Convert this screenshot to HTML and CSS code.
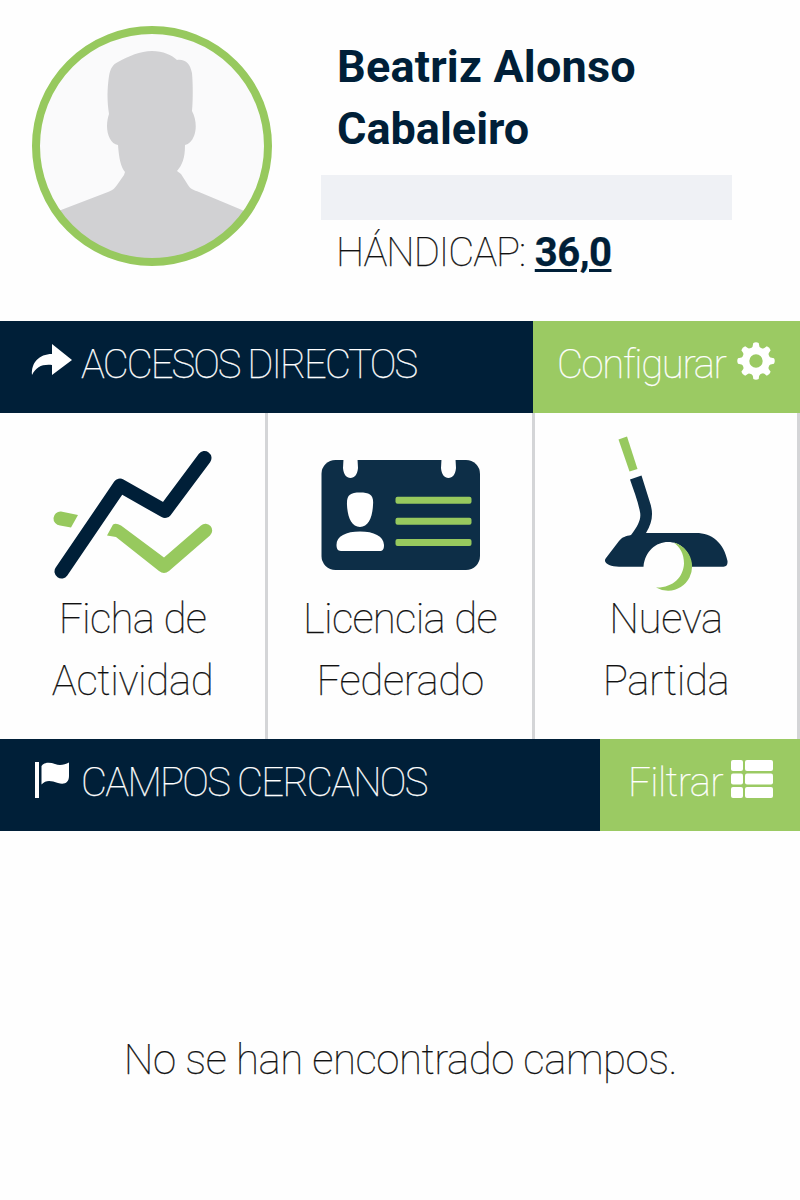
FILE: index.html
```
<!DOCTYPE html>
<html lang="es">
<head>
<meta charset="utf-8">
<title>Inicio</title>
<link rel="stylesheet" href="styles.css">
</head>
<body>
<header class="profile">
  <svg class="avatar" viewBox="0 0 240 240">
    <defs><clipPath id="face"><circle cx="120" cy="120" r="113"/></clipPath></defs>
    <circle cx="120" cy="120" r="116" fill="#fafafb"/>
    <path clip-path="url(#face)" fill="#d1d1d3" d="M0 205C12 197 20 188 29 184L76 166C81 164 83 162 85 159L92 149L93 146C89 141 87 133 86 119C79 118 75 109 75 100C75 95 76 91 77 88C75 75 75 64 77 50C78 43 81 38 86 36C97 30 108 25 120 25C131 25 140 29 145 34C154 33 158 38 160 47C161 59 161 73 160 85C164 92 165 103 162 110C160 115 157 118 153 119C153 133 150 139 145 145L149 148L156 159C158 163 162 164 167 166L210 184L240 200V240H0Z"/>
    <circle cx="120" cy="120" r="116" fill="none" stroke="#97c95e" stroke-width="8"/>
  </svg>
  <div class="info">
    <h1 class="name"><span class="name-a">Beatriz Alonso</span><br><span class="name-b">Cabaleiro</span></h1>
    <div class="redacted"></div>
    <p class="handicap"><span class="hc-label">HÁNDICAP:</span> <a class="hc-value">36,0</a></p>
  </div>
</header>

<section class="bar">
  <h2 class="bar-title">
    <svg class="ico-share" width="42" height="32" viewBox="0 0 42 32"><path fill="#fff" d="M21 0L41 16L21 31V21C11 20 5 23 1 31C0 19 8 10 21 10Z"/></svg>
    <span class="t-accesos">ACCESOS DIRECTOS</span>
  </h2>
  <a class="action action-config"><span class="t-config">Configurar</span>
    <svg class="ico-gear" width="38" height="38" viewBox="-19 -19 38 38"><g fill="#fff"><path fill-rule="evenodd" d="M-14 0A14 14 0 1 0 14 0A14 14 0 1 0-14 0ZM-6.700 0A6.700 6.700 0 1 1 6.700 0A6.700 6.700 0 1 1-6.700 0Z"/><path id="tooth" d="M-5-12Q-3-14-2.700-18Q0-19.500 2.700-18Q3-14 5-12Z"/><use href="#tooth" transform="rotate(45)"/><use href="#tooth" transform="rotate(90)"/><use href="#tooth" transform="rotate(135)"/><use href="#tooth" transform="rotate(180)"/><use href="#tooth" transform="rotate(225)"/><use href="#tooth" transform="rotate(270)"/><use href="#tooth" transform="rotate(315)"/></g></svg>
  </a>
</section>

<nav class="tiles">
  <a class="tile">
    <svg class="art" viewBox="0 0 266 180">
      <path fill="#97c95e" d="M61 98.500L78 102L71 114.500L60 112.500A7 7 0 0 1 61 98.500Z"/>
      <path fill="#97c95e" d="M107 122.500L113 111.500Q116 109.500 121 112.500L164 144.500L201 112.500A6.500 6.500 0 0 1 210 122.500L169 158Q164 162 159 158L116 124Z"/>
      <path fill="none" stroke="#001f38" stroke-width="14" stroke-linecap="round" stroke-linejoin="round" d="M61.500 158.500L120 72.500L165 98L204.500 45"/>
    </svg>
    <span class="label"><span class="t-ficha">Ficha de</span><br><span class="t-act">Actividad</span></span>
  </a>
  <a class="tile">
    <svg class="art" viewBox="0 0 266 180">
      <rect x="53.500" y="47" width="158.500" height="110" rx="14" fill="#0d2e47"/>
      <path fill="#fefefe" d="M75.500 46H89.500L90 55C89.500 61.500 86.500 65 82.500 65S75.500 61.500 75 55ZM173.500 46H187.500L188 55C187.500 61.500 184.500 65 180.500 65S173.500 61.500 173 55Z"/>
      <path fill="#fff" d="M92 79.500C102 79.500 106 82 105 92C104.500 104 100.500 114 92 114S79.500 104 79 92C78.500 82 82 79.500 92 79.500ZM73 138C69.500 138 68.500 135 68.500 132C68.500 123 78 118.500 92 118.500S115.500 123 116 132C116 136 115 138 111.500 138Z"/>
      <g fill="#97c95e"><rect x="127.500" y="83.700" width="76" height="7" rx="2"/><rect x="127.500" y="104.700" width="76" height="7" rx="2"/><rect x="127.500" y="125.900" width="76" height="7" rx="2"/></g>
    </svg>
    <span class="label"><span class="t-lic">Licencia de</span><br><span class="t-fed">Federado</span></span>
  </a>
  <a class="tile">
    <svg class="art" viewBox="0 0 266 180">
      <path fill="#97c95e" d="M83.500 26.500L92 23.500L102.500 56L94.500 58.500Z"/>
      <path fill="#0d2e47" d="M95 66.500L106.500 62.500L114.500 88C118.500 99 118 109 111 120H161C177 120 189 130 192.500 148Q193 153.700 188.500 153.700H157C155 137 145 129 133 129S110 138 108.500 153.700H84C75 153.700 67 150 71 145L84 128C87 124 91 123 96 122C103 113 106.500 106 105 99C103 88 98.500 77 95 66.500Z"/>
      <path fill="#97c95e" d="M138.500 129.500A24.500 24.500 0 0 1 157 152A24 24 0 0 1 121 174.500C138 175 148.500 164 149 150.500C149 141 145 133.500 138.500 129.500Z"/>
    </svg>
    <span class="label"><span class="t-nueva">Nueva</span><br><span class="t-part">Partida</span></span>
  </a>
</nav>

<section class="bar">
  <h2 class="bar-title">
    <svg class="ico-flag" width="36" height="38" viewBox="0 0 36 38"><path fill="#fff" d="M0 1H4V37H0ZM6.500 5C9 1 15 1 20 3C25 5 30 3.500 34 1.500V15C34 22 29 24 23 22C16 19.500 11 18.500 6.500 23.500Z"/></svg>
    <span class="t-campos">CAMPOS CERCANOS</span>
  </h2>
  <a class="action action-filter"><span class="t-filtrar">Filtrar</span>
    <svg class="ico-list" width="42" height="38" viewBox="0 0 42 38"><g fill="#fff"><rect width="12" height="11" rx="2"/><rect x="14" width="28" height="11" rx="2"/><rect y="13.500" width="12" height="11" rx="2"/><rect x="14" y="13.500" width="28" height="11" rx="2"/><rect y="27" width="12" height="11" rx="2"/><rect x="14" y="27" width="28" height="11" rx="2"/></g></svg>
  </a>
</section>

<p class="empty"><span class="t-empty">No se han encontrado campos.</span></p>
</body>
</html>
```
FILE: styles.css
```
* { box-sizing: border-box; }
body { margin: 0; background: #fefefe; color: #111; font-family: Roboto, "Open Sans", sans-serif; font-weight: 100; font-size: 42px; line-height: 62px; }
h1, h2, p { margin: 0; font-weight: inherit; font-size: inherit; }
span { white-space: nowrap; }
svg { display: block; flex: none; }
.profile { display: flex; height: 321px; padding: 26px 0 0 32px; }
.avatar { width: 240px; height: 240px; }
.info { padding: 10px 0 0 49px; }
.name { padding-left: 16px; font-size: 45px; font-weight: 700; color: #001f38; letter-spacing: 0.2px; }
.name-b { letter-spacing: 0; }
.redacted { width: 411px; height: 45px; margin-top: 15px; background: #eff1f5; }
.handicap { padding: 2px 0 0 15px; font-size: 40px; }
.hc-label { letter-spacing: -1px; }
.hc-value { font-weight: 700; color: #001f38; letter-spacing: -0.5px; text-decoration: underline; text-decoration-thickness: 3px; text-underline-offset: 3px; }
.bar { display: flex; height: 92px; background: #001f38; color: #fff; font-size: 40px; }
.bar-title { display: flex; flex: 1; align-items: center; padding-left: 31px; padding-bottom: 4px; }
.action { display: flex; align-items: center; background: #9bca63; padding-bottom: 4px; }
.action-config { width: 267px; padding-left: 24px; }
.action-filter { width: 200px; padding-left: 28px; }
.ico-share { margin: -10px 8px 0 0; }
.ico-flag { margin: -7px 10px 0 4px; }
.ico-gear { margin: -8px 0 0 11px; }
.ico-list { margin: -8px 0 0 8px; }
.t-accesos { letter-spacing: -1.95px; }
.t-campos { letter-spacing: -1.7px; }
.t-config { letter-spacing: -1.3px; }
.t-filtrar { letter-spacing: -0.6px; }
.tiles { display: grid; grid-template-columns: 268px 267px 265px; height: 326px; }
.tile { border-right: 3px solid #d4d5d7; text-align: center; }
.art { width: 266px; height: 180px; margin-bottom: -5px; }
.label { display: block; }
.label, .empty, .handicap, .bar { -webkit-text-stroke: 0.25px currentColor; }
.t-ficha, .t-lic { letter-spacing: -0.75px; }
.t-act, .t-fed, .t-nueva, .t-part { letter-spacing: -0.4px; }
.empty { padding: 198px 0 0 1px; text-align: center; }
.t-empty { letter-spacing: -0.48px; }
```
